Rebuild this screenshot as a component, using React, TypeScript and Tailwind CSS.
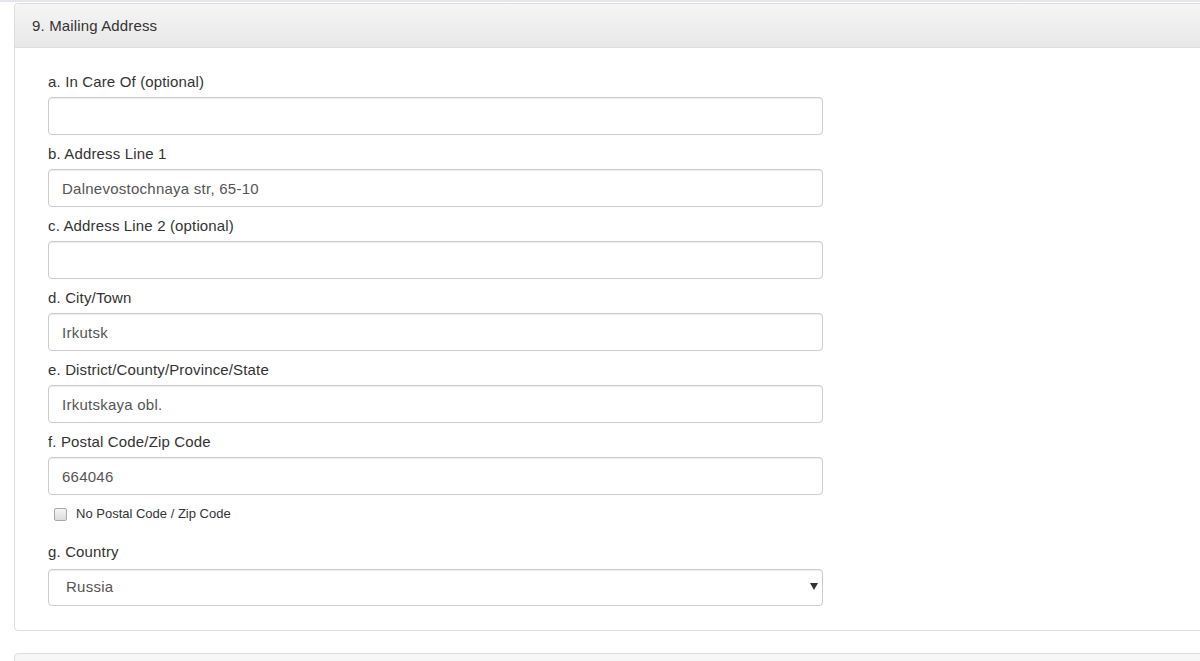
import React from 'react';

interface Field {
  label: string;
  value: string;
}

const fields: Field[] = [
  { label: 'a. In Care Of (optional)', value: '' },
  { label: 'b. Address Line 1', value: 'Dalnevostochnaya str, 65-10' },
  { label: 'c. Address Line 2 (optional)', value: '' },
  { label: 'd. City/Town', value: 'Irkutsk' },
  { label: 'e. District/County/Province/State', value: 'Irkutskaya obl.' },
  { label: 'f. Postal Code/Zip Code', value: '664046' },
];

const inputCls =
  'block w-[775px] h-[38px] px-[13px] bg-white border border-[#ccc] rounded-[4px] shadow-[inset_0_1px_1px_rgba(0,0,0,0.075)] text-[15px] tracking-[0.25px] text-[#555] outline-none';

export default function App() {
  return (
    <div className="h-[661px] w-[1200px] overflow-hidden bg-white font-['Liberation_Sans',Arial,sans-serif] text-[15px] tracking-[0.15px] text-[#333]">
      {/* tail of previous section */}
      <div className="h-[2px] bg-[#e4e6eb]" />

      <div className="ml-[14px] mt-px w-[1200px] border border-[#ddd] rounded-[4px] bg-white">
        <div className="h-[44px] pl-[17px] pt-[2px] flex items-center bg-gradient-to-b from-[#f5f5f5] to-[#e8e8e8] border-b border-[#ddd] rounded-t-[4px]">
          9. Mailing Address
        </div>

        <div className="pl-[33px] pt-[24px] pb-[24px]">
          {fields.map((f, i) => (
            <div key={i} className={i === fields.length - 1 ? '' : 'mb-[9px]'}>
              <label className="block h-[20px] leading-[20px] mb-[5px]">{f.label}</label>
              <input type="text" defaultValue={f.value} className={inputCls} />
            </div>
          ))}

          {/* no postal code */}
          <label className="mt-[9px] mb-[18px] ml-[6px] h-[20px] flex items-center gap-[9px] text-[13px] tracking-normal text-[#333]">
            <input
              type="checkbox"
              className="appearance-none w-[13px] h-[13px] border border-[#a9a9a9] rounded-[2px] bg-gradient-to-b from-[#f4f4f4] to-[#dcdcdc]"
            />
            No Postal Code / Zip Code
          </label>

          <div>
            <label className="block h-[20px] leading-[20px] mb-[7px]">g. Country</label>
            <div className="relative w-[775px]">
              <select
                defaultValue="Russia"
                className="block w-[775px] h-[37px] pl-[17px] appearance-none bg-white border border-[#ccc] rounded-[4px] shadow-[inset_0_1px_1px_rgba(0,0,0,0.075)] text-[15px] tracking-[0.25px] text-[#555] outline-none"
              >
                <option>Russia</option>
              </select>
              <span className="pointer-events-none absolute right-[5px] top-[14px] w-0 h-0 border-l-[4px] border-r-[4px] border-t-[7px] border-l-transparent border-r-transparent border-t-[#333]" />
            </div>
          </div>
        </div>
      </div>

      {/* next section */}
      <div className="ml-[14px] mt-[22px] w-[1200px] h-[40px] border border-[#ddd] rounded-t-[4px] bg-gradient-to-b from-[#f7f7f7] to-[#efefef]" />
    </div>
  );
}
